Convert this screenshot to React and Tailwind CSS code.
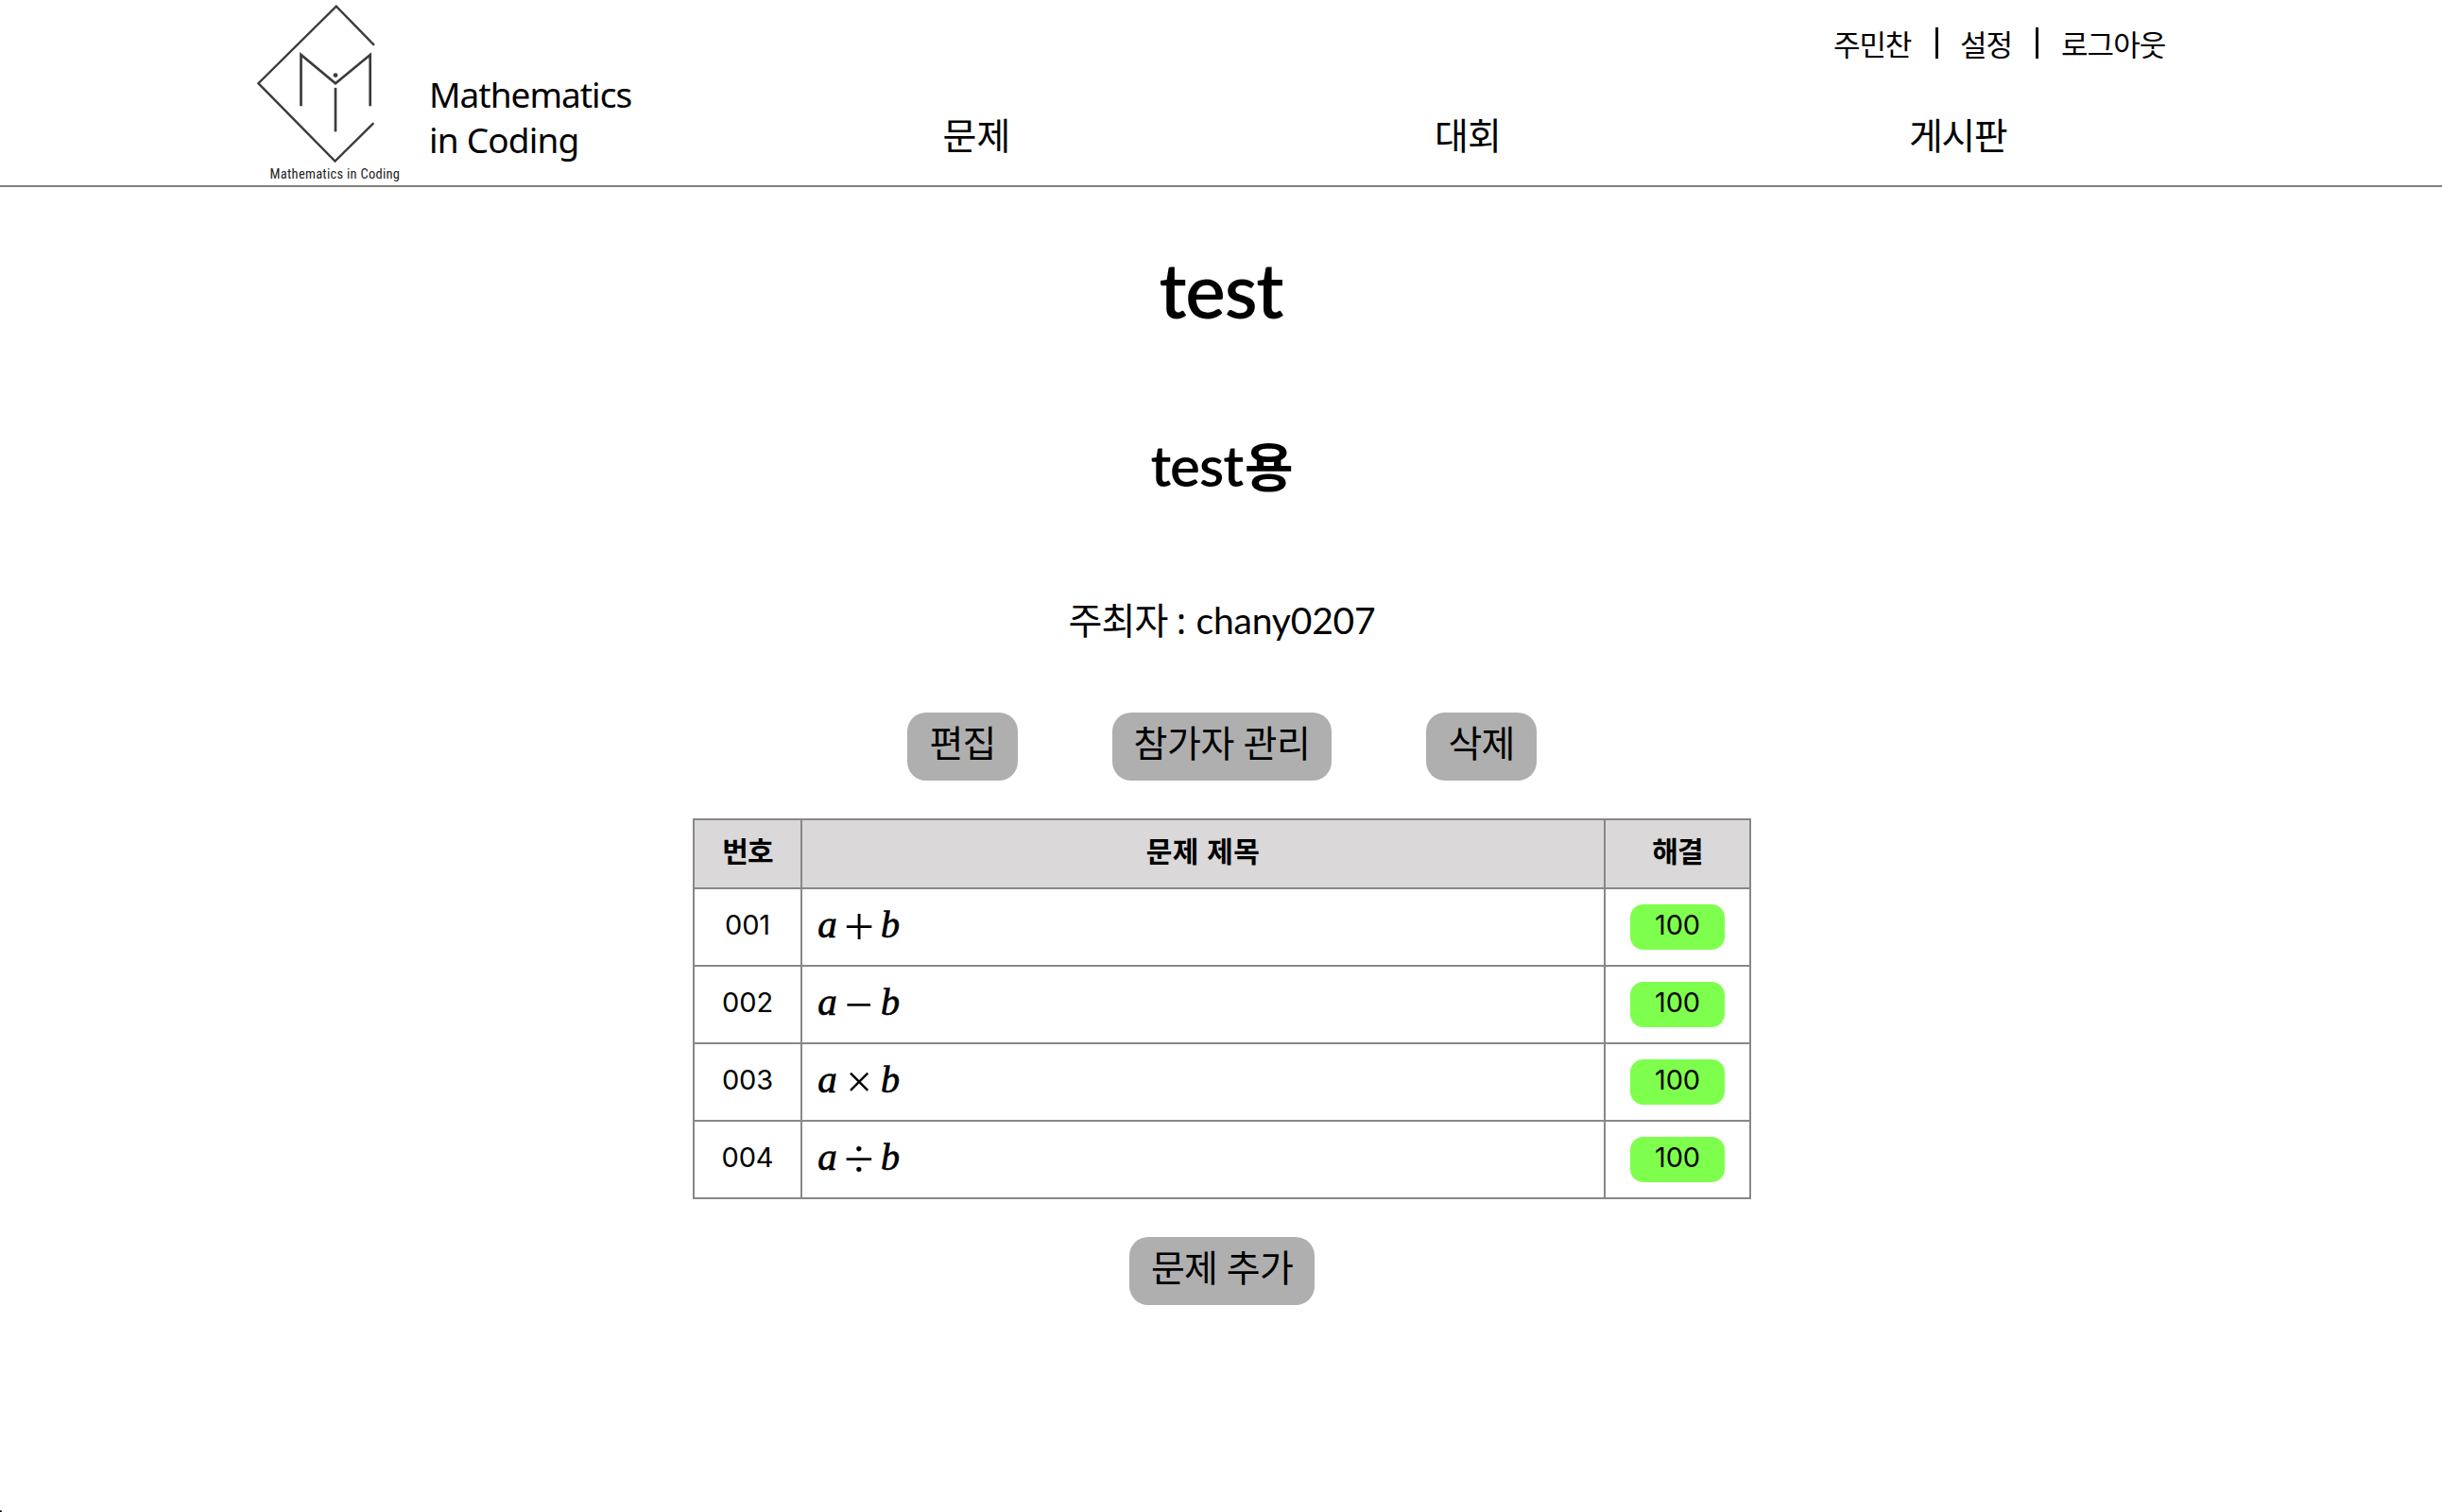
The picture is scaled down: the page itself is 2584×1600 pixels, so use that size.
import React from 'react';

const problems = [
  { no: '001', op: '+', size: 'text-[57px]' },
  { no: '002', op: '−', size: 'text-[53px]' },
  { no: '003', op: '×', size: 'text-[49px]' },
  { no: '004', op: '÷', size: 'text-[57px]' },
];

function Logo() {
  return (
    <svg
      className="h-[196px] w-[196px] shrink-0"
      viewBox="258 0 196 196"
      fill="none"
      stroke="#3c3c3c"
      strokeWidth="2.4"
      strokeLinecap="round"
    >
      <path d="M395.3 47.2 355.8 6.6 273.4 88.2 354.5 170.6 394.7 130.8" />
      <path d="M318.5 111V58L355 88.3 391.7 58V111" strokeWidth="2.7" strokeLinecap="square" />
      <path d="M355 94.2V138" strokeWidth="2.7" strokeLinecap="square" />
      <circle cx="355" cy="79.6" r="2.4" fill="#3c3c3c" stroke="none" />
      <text
        x="285.6"
        y="188.8"
        textLength="137.4"
        lengthAdjust="spacing"
        fill="#222222"
        className="font-['Roboto',sans-serif] text-[14.5px] [font-stretch:87.5%]"
        stroke="none"
      >
        Mathematics in Coding
      </text>
    </svg>
  );
}

function Button({ children, className }) {
  return (
    <button
      className={`h-[72px] rounded-[20px] bg-[#afafaf] pb-[9px] text-center text-[39px] leading-[63px] whitespace-nowrap ${className}`}
    >
      {children}
    </button>
  );
}

function Header() {
  return (
    <header className="flex h-[198px] border-b-2 border-[#808080] pl-[258px]">
      <Logo />
      <div className="w-[319px] shrink-0 pt-[76px] text-[37px] leading-[48px] tracking-[-1px]">
        Mathematics
        <br />
        <span className="tracking-[-0.8px]">in Coding</span>
      </div>
      <div className="flex w-[1560px] shrink-0 flex-col">
        <div className="flex pt-[27px] pl-[1167px] text-[31px] leading-10 tracking-[-1.1px] whitespace-nowrap">
          <a className="w-[108px] shrink-0">주민찬</a>
          <span className="mt-[2px] h-[33px] w-[3px] shrink-0 bg-black" />
          <a className="w-[103px] shrink-0 pl-[23px]">설정</a>
          <span className="mt-[2px] h-[33px] w-[3px] shrink-0 bg-black" />
          <a className="shrink-0 pl-[24px] tracking-[-0.9px]">로그아웃</a>
        </div>
        <nav className="grid grid-cols-3 pt-[52px] text-center text-[39px] leading-[48px]">
          <a className="pl-px">문제</a>
          <a className="tracking-[-1px]">대회</a>
          <a className="pr-[3px] tracking-[-1.5px]">게시판</a>
        </nav>
      </div>
    </header>
  );
}

function ProblemTable() {
  return (
    <div className="mt-10 grid grid-cols-[112px_848px_152px] grid-rows-[71px_80px_80px_80px_80px] gap-[2px] bg-[#888888] p-[2px] text-center text-[30px]">
      <div className="bg-[#dad8d9] leading-[66px] font-bold tracking-[-0.8px]">번호</div>
      <div className="bg-[#dad8d9] leading-[66px] font-bold tracking-[0.5px]">문제 제목</div>
      <div className="bg-[#dad8d9] leading-[66px] font-bold tracking-[-0.8px]">해결</div>
      {problems.map((p) => (
        <React.Fragment key={p.no}>
          <div className="bg-white font-['Inter',sans-serif] text-[29px] leading-[75px] tracking-[-0.1px]">
            {p.no}
          </div>
          <div className="flex bg-white pl-4 font-['Liberation_Serif',serif]">
            <i className="w-[21px] text-[41px] leading-[75px] [-webkit-text-stroke:0.7px_black]">a</i>
            <span className={`flex w-[46px] justify-center leading-[80px] ${p.size}`}>{p.op}</span>
            <i className="w-[18px] text-[40px] leading-[75px] [-webkit-text-stroke:0.7px_black]">b</i>
          </div>
          <div className="flex items-center justify-center bg-white">
            <span className="h-12 w-[100px] rounded-[14px] bg-[#7fff4d] font-['Inter',sans-serif] text-[29px] leading-[43px] tracking-[-0.2px]">
              100
            </span>
          </div>
        </React.Fragment>
      ))}
    </div>
  );
}

export default function App() {
  return (
    <div className="relative h-[1600px] w-[2584px] overflow-hidden bg-white font-['Noto_Sans','Noto_Sans_CJK_KR',sans-serif] text-black">
      <Header />
      <main className="flex flex-col items-center pt-[58px] pl-[2px]">
        <h1 className="h-[100px] pr-[2px] font-['Lato',sans-serif] text-[80px] leading-[100px] font-semibold tracking-[-1.2px]">
          test
        </h1>
        <h2 className="mt-[96px] h-[80px] font-['Lato','Noto_Sans_CJK_KR',sans-serif] text-[60px] leading-[81px] font-semibold tracking-[-1px]">
          test<span className="ml-[2px] text-[56px] font-bold tracking-normal">용</span>
        </h2>
        <p className="mt-[100px] h-[48px] text-[39px] leading-[48px] tracking-[-0.9px]">
          주최자 :{' '}
          <span className="ml-[2px] font-['Lato',sans-serif] tracking-[-0.2px]">chany0207</span>
        </p>
        <div className="mt-[74px] flex gap-[100px]">
          <Button className="w-[117px] tracking-[-1px]">편집</Button>
          <Button className="w-[232px] tracking-[-0.4px]">참가자 관리</Button>
          <Button className="w-[117px] tracking-[-1px]">삭제</Button>
        </div>
        <ProblemTable />
        <Button className="mt-10 w-[196px] tracking-[-0.7px]">문제 추가</Button>
      </main>
      <span className="absolute bottom-0 left-0 size-[2px] rounded-tr-full bg-black" />
    </div>
  );
}
